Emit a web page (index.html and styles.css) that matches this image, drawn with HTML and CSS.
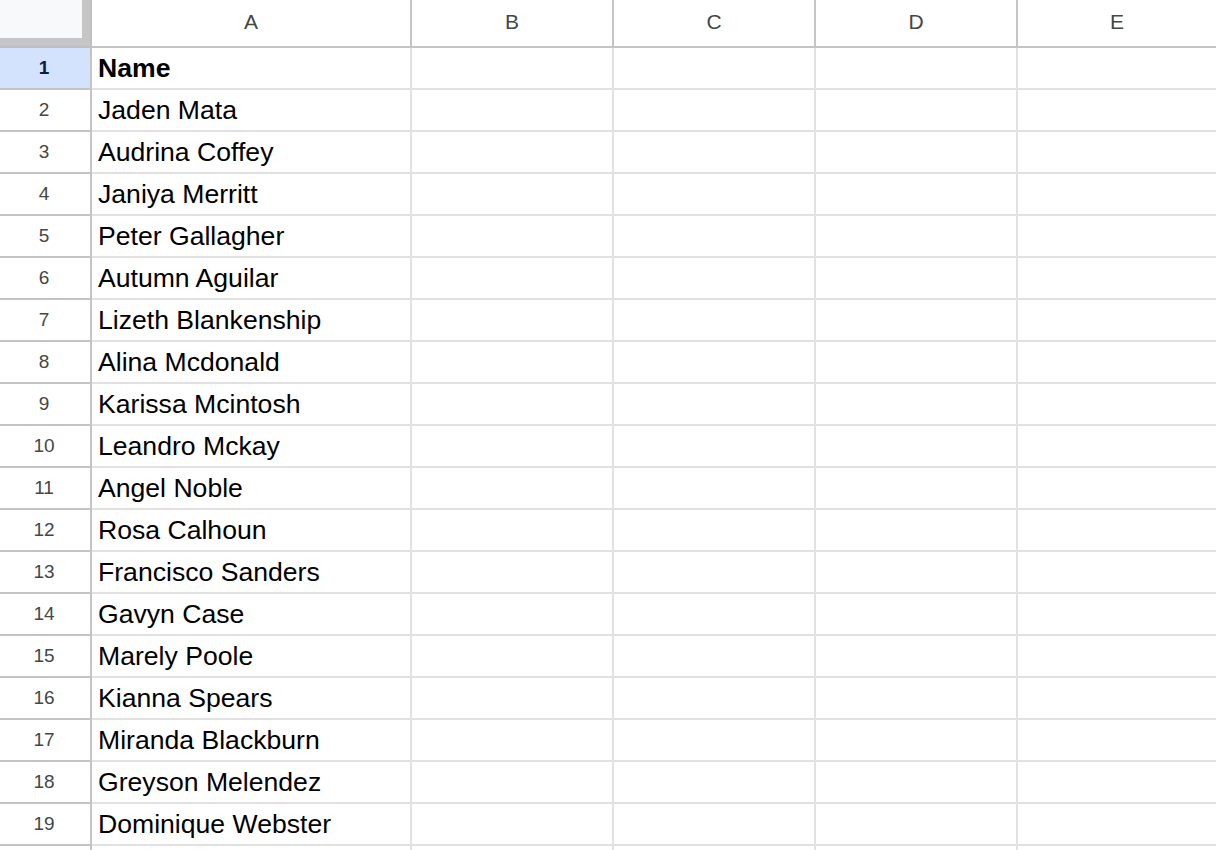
FILE: index.html
```html
<!DOCTYPE html>
<html>
<head>
<meta charset="utf-8">
<link rel="stylesheet" href="styles.css">
</head>
<body>
<div class="sheet">
  <div class="corner"><div class="corner-inner"></div></div>
  <div class="colhead">A</div>
  <div class="colhead">B</div>
  <div class="colhead">C</div>
  <div class="colhead">D</div>
  <div class="colhead last">E</div>

  <div class="rowhead active">1</div>
  <div class="cell bold">Name</div><div class="cell"></div><div class="cell"></div><div class="cell"></div><div class="cell last"></div>

  <div class="rowhead">2</div>
  <div class="cell">Jaden Mata</div><div class="cell"></div><div class="cell"></div><div class="cell"></div><div class="cell last"></div>
  <div class="rowhead">3</div>
  <div class="cell">Audrina Coffey</div><div class="cell"></div><div class="cell"></div><div class="cell"></div><div class="cell last"></div>
  <div class="rowhead">4</div>
  <div class="cell">Janiya Merritt</div><div class="cell"></div><div class="cell"></div><div class="cell"></div><div class="cell last"></div>
  <div class="rowhead">5</div>
  <div class="cell">Peter Gallagher</div><div class="cell"></div><div class="cell"></div><div class="cell"></div><div class="cell last"></div>
  <div class="rowhead">6</div>
  <div class="cell">Autumn Aguilar</div><div class="cell"></div><div class="cell"></div><div class="cell"></div><div class="cell last"></div>
  <div class="rowhead">7</div>
  <div class="cell">Lizeth Blankenship</div><div class="cell"></div><div class="cell"></div><div class="cell"></div><div class="cell last"></div>
  <div class="rowhead">8</div>
  <div class="cell">Alina Mcdonald</div><div class="cell"></div><div class="cell"></div><div class="cell"></div><div class="cell last"></div>
  <div class="rowhead">9</div>
  <div class="cell">Karissa Mcintosh</div><div class="cell"></div><div class="cell"></div><div class="cell"></div><div class="cell last"></div>
  <div class="rowhead">10</div>
  <div class="cell">Leandro Mckay</div><div class="cell"></div><div class="cell"></div><div class="cell"></div><div class="cell last"></div>
  <div class="rowhead">11</div>
  <div class="cell">Angel Noble</div><div class="cell"></div><div class="cell"></div><div class="cell"></div><div class="cell last"></div>
  <div class="rowhead">12</div>
  <div class="cell">Rosa Calhoun</div><div class="cell"></div><div class="cell"></div><div class="cell"></div><div class="cell last"></div>
  <div class="rowhead">13</div>
  <div class="cell">Francisco Sanders</div><div class="cell"></div><div class="cell"></div><div class="cell"></div><div class="cell last"></div>
  <div class="rowhead">14</div>
  <div class="cell">Gavyn Case</div><div class="cell"></div><div class="cell"></div><div class="cell"></div><div class="cell last"></div>
  <div class="rowhead">15</div>
  <div class="cell">Marely Poole</div><div class="cell"></div><div class="cell"></div><div class="cell"></div><div class="cell last"></div>
  <div class="rowhead">16</div>
  <div class="cell">Kianna Spears</div><div class="cell"></div><div class="cell"></div><div class="cell"></div><div class="cell last"></div>
  <div class="rowhead">17</div>
  <div class="cell">Miranda Blackburn</div><div class="cell"></div><div class="cell"></div><div class="cell"></div><div class="cell last"></div>
  <div class="rowhead">18</div>
  <div class="cell">Greyson Melendez</div><div class="cell"></div><div class="cell"></div><div class="cell"></div><div class="cell last"></div>
  <div class="rowhead">19</div>
  <div class="cell">Dominique Webster</div><div class="cell"></div><div class="cell"></div><div class="cell"></div><div class="cell last"></div>
  <div class="rowhead"></div>
  <div class="cell"></div><div class="cell"></div><div class="cell"></div><div class="cell"></div><div class="cell last"></div>
</div>
</body>
</html>
```
FILE: styles.css
```css
html, body {
  margin: 0;
  padding: 0;
  background: #ffffff;
  overflow: hidden;
}

.sheet {
  display: grid;
  grid-template-columns: 92px 320px 202px 202px 202px 1fr;
  grid-template-rows: 48px;
  grid-auto-rows: 42px;
  width: 1216px;
  height: 850px;
  overflow: hidden;
  font-family: "Liberation Sans", Arial, Helvetica, sans-serif;
}

.sheet > div {
  box-sizing: border-box;
  min-width: 0;
}

.corner {
  border-right: 2px solid #bfbfbf;
  border-bottom: 2px solid #bfbfbf;
  display: flex;
}

.corner-inner {
  flex: 1;
  background: #f8f9fa;
  border-right: 8px solid #c6c6c6;
  border-bottom: 8px solid #c6c6c6;
}

.colhead {
  border-right: 2px solid #c4c4c4;
  border-bottom: 2px solid #c4c4c4;
  display: flex;
  align-items: center;
  justify-content: center;
  font-size: 21px;
  color: #444746;
  padding-bottom: 2px;
}

.rowhead {
  border-right: 2px solid #c4c4c4;
  border-bottom: 2px solid #c4c4c4;
  display: flex;
  align-items: center;
  justify-content: center;
  font-size: 19px;
  color: #444746;
  padding-right: 2px;
}

.rowhead.active {
  background: #d3e3fd;
  color: #0b1c46;
  font-weight: bold;
}

.cell {
  border-right: 2px solid #e1e1e1;
  border-bottom: 2px solid #e1e1e1;
  font-size: 26.6px;
  line-height: 40px;
  color: #000000;
  padding-left: 6px;
  white-space: nowrap;
  overflow: hidden;
}

.cell.bold {
  font-weight: bold;
}

.last {
  border-right: none;
}
```
